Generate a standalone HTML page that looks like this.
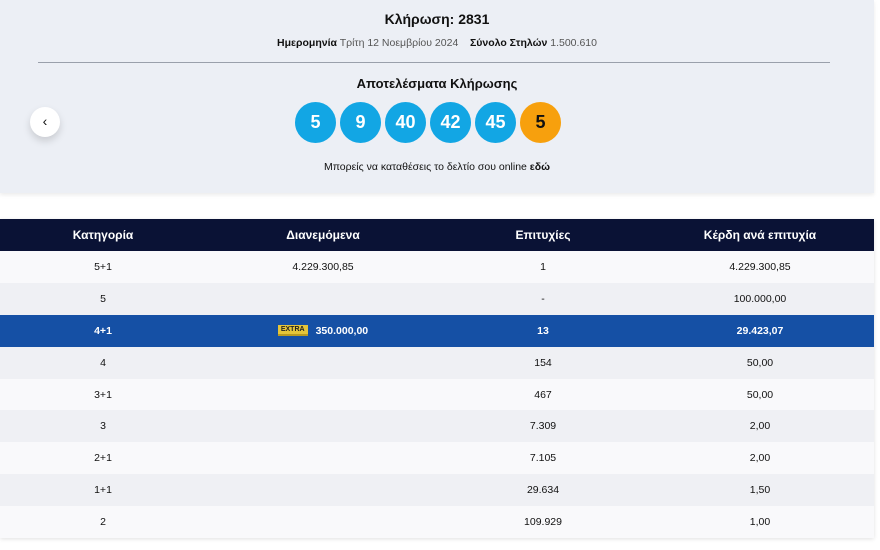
<!DOCTYPE html>
<html><head><meta charset="utf-8"><style>
body{margin:0;width:880px;height:550px;background:#fff;font-family:"Liberation Sans",sans-serif;overflow:hidden;position:relative;color:#111}
.top{position:absolute;left:0;top:0;width:874px;height:193px;background:#eceff5;box-shadow:0 2px 4px rgba(0,0,0,.08)}
.t1{position:absolute;top:11px;width:100%;text-align:center;font-weight:bold;font-size:14px}
.t2{position:absolute;top:37px;width:100%;text-align:center;font-size:10.5px;color:#555}
.t2 b{color:#111}
.hr{position:absolute;left:38px;width:792px;top:62px;border-top:1px solid #9aa0ab}
.t3{position:absolute;top:76px;width:100%;text-align:center;font-weight:bold;font-size:13px}
.balls{position:absolute;top:102px;left:295px;display:flex;gap:4px}
.ball{width:41px;height:41px;border-radius:50%;background:#12a6e4;color:#fff;font-weight:bold;font-size:18px;display:flex;align-items:center;justify-content:center}
.ball.o{background:#f7a00d;color:#111}
.t4{position:absolute;top:161px;width:100%;text-align:center;font-size:10.5px}
.back{position:absolute;left:30px;top:107px;width:30px;height:30px;border-radius:50%;background:#fff;box-shadow:0 4px 8px rgba(0,0,0,.15);font-size:14px;text-align:center;line-height:28px}
table{position:absolute;top:219px;left:0;width:874px;border-collapse:collapse;table-layout:fixed;font-size:10.5px;box-shadow:0 1px 4px rgba(0,0,0,.12)}
th{background:#0a1235;color:#fff;height:32px;font-size:12px;padding:0}
td{height:31.9px;text-align:center;padding:0}
tr:nth-child(odd) td{background:#f9f9fb}
tr:nth-child(even) td{background:#eff0f4}
tr.hl td{background:#1550a5;color:#fff;font-weight:bold}
.ex{display:inline-block;background:#e4c53a;color:#222;font-size:7px;padding:1px 3px;margin-right:8px;border-bottom:2px solid #b89a20;vertical-align:middle}
</style></head><body>
<div class="top">
<div class="t1">Κλήρωση: 2831</div>
<div class="t2"><b>Ημερομηνία</b> Τρίτη 12 Νοεμβρίου 2024 &nbsp;&nbsp; <b>Σύνολο Στηλών</b> 1.500.610</div>
<div class="hr"></div>
<div class="t3">Αποτελέσματα Κλήρωσης</div>
<div class="balls"><div class="ball">5</div><div class="ball">9</div><div class="ball">40</div><div class="ball">42</div><div class="ball">45</div><div class="ball o">5</div></div>
<div class="t4">Μπορείς να καταθέσεις το δελτίο σου online <b>εδώ</b></div>
<div class="back">‹</div>
</div>
<table>
<colgroup><col style="width:206px"><col style="width:234px"><col style="width:206px"><col style="width:228px"></colgroup>
<tr><th>Κατηγορία</th><th>Διανεμόμενα</th><th>Επιτυχίες</th><th>Κέρδη ανά επιτυχία</th></tr>
<tbody>
<tr><td>5+1</td><td>4.229.300,85</td><td>1</td><td>4.229.300,85</td></tr>
<tr><td>5</td><td></td><td>-</td><td>100.000,00</td></tr>
<tr class="hl"><td>4+1</td><td><span class="ex">EXTRA</span>350.000,00</td><td>13</td><td>29.423,07</td></tr>
<tr><td>4</td><td></td><td>154</td><td>50,00</td></tr>
<tr><td>3+1</td><td></td><td>467</td><td>50,00</td></tr>
<tr><td>3</td><td></td><td>7.309</td><td>2,00</td></tr>
<tr><td>2+1</td><td></td><td>7.105</td><td>2,00</td></tr>
<tr><td>1+1</td><td></td><td>29.634</td><td>1,50</td></tr>
<tr><td>2</td><td></td><td>109.929</td><td>1,00</td></tr>
</tbody></table>
</body></html>
